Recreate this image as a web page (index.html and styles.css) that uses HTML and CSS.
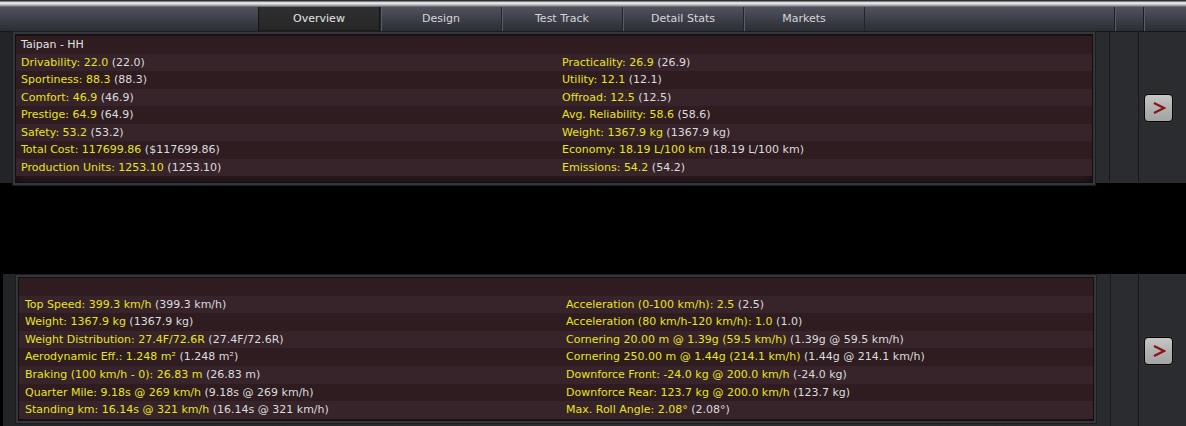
FILE: index.html
```html
<html lang="en">
  <head>
    <meta charset="UTF-8" />
    <title>Car Overview</title>
    <link rel="stylesheet" href="styles.css">
  </head>
  <body>
    <div class="chrome"></div>
    <div class="tabbar">
      <div class="tab-fill-left"></div>
      <div class="tab active">Overview</div>
      <div class="tab">Design</div>
      <div class="tab">Test Track</div>
      <div class="tab">Detail Stats</div>
      <div class="tab">Markets</div>
      <div class="tab-fill-right"></div>
      <div class="tab-sep narrow"></div>
      <div class="tab-sep wide"></div>
    </div>

    <!-- overview panel -->
    <div class="section top">
      <div class="frame">
        <div class="panel">
          <div class="row"><span class="cell plain">Taipan - HH</span><span class="cell"></span></div>
          <div class="row"><span class="cell"><b>Drivability: 22.0</b> (22.0)</span><span class="cell"><b>Practicality: 26.9</b> (26.9)</span></div>
          <div class="row"><span class="cell"><b>Sportiness: 88.3</b> (88.3)</span><span class="cell"><b>Utility: 12.1</b> (12.1)</span></div>
          <div class="row"><span class="cell"><b>Comfort: 46.9</b> (46.9)</span><span class="cell"><b>Offroad: 12.5</b> (12.5)</span></div>
          <div class="row"><span class="cell"><b>Prestige: 64.9</b> (64.9)</span><span class="cell"><b>Avg. Reliability: 58.6</b> (58.6)</span></div>
          <div class="row"><span class="cell"><b>Safety: 53.2</b> (53.2)</span><span class="cell"><b>Weight: 1367.9 kg</b> (1367.9 kg)</span></div>
          <div class="row"><span class="cell"><b>Total Cost: 117699.86</b> ($117699.86)</span><span class="cell"><b>Economy: 18.19 L/100 km</b> (18.19 L/100 km)</span></div>
          <div class="row"><span class="cell"><b>Production Units: 1253.10</b> (1253.10)</span><span class="cell"><b>Emissions: 54.2</b> (54.2)</span></div>
        </div>
      </div>
      <div class="side"></div>
      <div class="btncol">
        <div class="next-btn">
          <svg width="14" height="14" viewBox="0 0 14 14"><polyline points="2,2 12,7 2,12" fill="none" stroke="#8c1212" stroke-width="2.2"/></svg>
        </div>
      </div>
    </div>

    <div class="gap"></div>

    <!-- performance panel -->
    <div class="section bottom">
      <div class="frame">
        <div class="panel">
          <div class="row"><span class="cell"></span><span class="cell"></span></div>
          <div class="row"><span class="cell"><b>Top Speed: 399.3 km/h</b> (399.3 km/h)</span><span class="cell"><b>Acceleration (0-100 km/h): 2.5</b> (2.5)</span></div>
          <div class="row"><span class="cell"><b>Weight: 1367.9 kg</b> (1367.9 kg)</span><span class="cell"><b>Acceleration (80 km/h-120 km/h): 1.0</b> (1.0)</span></div>
          <div class="row"><span class="cell"><b>Weight Distribution: 27.4F/72.6R</b> (27.4F/72.6R)</span><span class="cell"><b>Cornering 20.00 m @ 1.39g (59.5 km/h)</b> (1.39g @ 59.5 km/h)</span></div>
          <div class="row"><span class="cell"><b>Aerodynamic Eff.: 1.248 m²</b> (1.248 m²)</span><span class="cell"><b>Cornering 250.00 m @ 1.44g (214.1 km/h)</b> (1.44g @ 214.1 km/h)</span></div>
          <div class="row"><span class="cell"><b>Braking (100 km/h - 0): 26.83 m</b> (26.83 m)</span><span class="cell"><b>Downforce Front: -24.0 kg @ 200.0 km/h</b> (-24.0 kg)</span></div>
          <div class="row"><span class="cell"><b>Quarter Mile: 9.18s @ 269 km/h</b> (9.18s @ 269 km/h)</span><span class="cell"><b>Downforce Rear: 123.7 kg @ 200.0 km/h</b> (123.7 kg)</span></div>
          <div class="row"><span class="cell"><b>Standing km: 16.14s @ 321 km/h</b> (16.14s @ 321 km/h)</span><span class="cell"><b>Max. Roll Angle: 2.08°</b> (2.08°)</span></div>
        </div>
      </div>
      <div class="side"></div>
      <div class="btncol">
        <div class="next-btn">
          <svg width="14" height="14" viewBox="0 0 14 14"><polyline points="2,2 12,7 2,12" fill="none" stroke="#8c1212" stroke-width="2.2"/></svg>
        </div>
      </div>
    </div>
  </body>
</html>
```

FILE: styles.css
```css
/* page */
body {
  margin: 0;
  padding: 0;
  width: 1186px;
  height: 426px;
  overflow: hidden;
  background-color: #000;
  font-family: "DejaVu Sans", Verdana, sans-serif;
  font-size: 11px;
  color: #dcdcdc;
}

/* window chrome */
.chrome {
  height: 7px;
  background: linear-gradient(#2e2f33 0, #2e2f33 14%, #c9cacc 28%, #f0f0f0 45%, #a9abb0 75%, #55575d 100%);
}

/* tab bar */
.tabbar {
  display: flex;
  height: 24px;
  background: linear-gradient(#4f525d, #3a3c45 60%, #2c2e35);
  border-bottom: 1px solid #16171a;
}

.tab-fill-left {
  width: 258px;
}

.tab-fill-right {
  flex: 1;
}

.tab {
  width: 120px;
  line-height: 23px;
  text-align: center;
  color: #d6d6d8;
  border-left: 1px solid #24252a;
  box-shadow: inset 1px 0 0 #5a5d68;
}

.tab.active {
  background: linear-gradient(#2f2f31, #262627);
  border-left: 1px solid #151515;
  border-right: 1px solid #151515;
  box-shadow: inset 0 -1px 0 #1a1a1a;
  color: #e4e4e4;
}

.tab + .tab-fill-right {
  border-left: 1px solid #24252a;
}

.tab-sep {
  border-left: 1px solid #1b1c20;
  box-shadow: inset 1px 0 0 #5a5d68;
}

.tab-sep.narrow {
  width: 28px;
}

.tab-sep.wide {
  width: 42px;
}

/* sections */
.section {
  display: flex;
  background-color: #2a2b2f;
}

.section.top {
  height: 151px;
}

.section.bottom {
  height: 153px;
  margin-left: 3px;
}

.gap {
  height: 91px;
  background-color: #000;
}

.frame {
  width: 1115px;
  background: linear-gradient(90deg, #232427, #2c2d31 50%, #2a2b2e);
}

.panel {
  margin: 2px 16px 0 15px;
  height: 142px;
  padding: 1px 0 4px 0;
  background-color: #2f1d22;
  border: 1px solid #101012;
  box-shadow: 0 0 0 2px #34363c, 0 0 0 3px #1c1d20, inset 0 0 14px rgba(0, 0, 0, 0.7);
}

.bottom .panel {
  margin-top: 3px;
  height: 141px;
  padding: 0 0 1px 0;
}

/* striped rows */
.row {
  display: grid;
  grid-template-columns: 541px 1fr;
  height: 17.5px;
  line-height: 17.5px;
  padding-left: 5px;
  background-color: #2e1c21;
}

.bottom .row {
  height: 17.6px;
  line-height: 17.6px;
  padding-left: 6px;
}

.row:nth-child(even) {
  background-color: #37232a;
}

.cell {
  white-space: nowrap;
  color: #dcdcdc;
}

.cell b {
  font-weight: normal;
  color: #e8e51a;
}

.cell.plain {
  color: #e2e2e2;
}

/* side columns */
.side {
  width: 28px;
  border-left: 1px solid #17181b;
  background-color: #2b2c30;
}

.btncol {
  width: 42px;
  border-left: 1px solid #17181b;
  background-color: #2b2c30;
  display: flex;
  align-items: center;
  padding-left: 5px;
}

.next-btn {
  width: 27px;
  height: 26px;
  border: 1px solid #050505;
  border-radius: 4px;
  background: linear-gradient(#c6c6c6, #b2b2b2 50%, #a4a4a4);
  box-shadow: 0 0 0 1px #333;
  display: flex;
  align-items: center;
  justify-content: center;
}
```
